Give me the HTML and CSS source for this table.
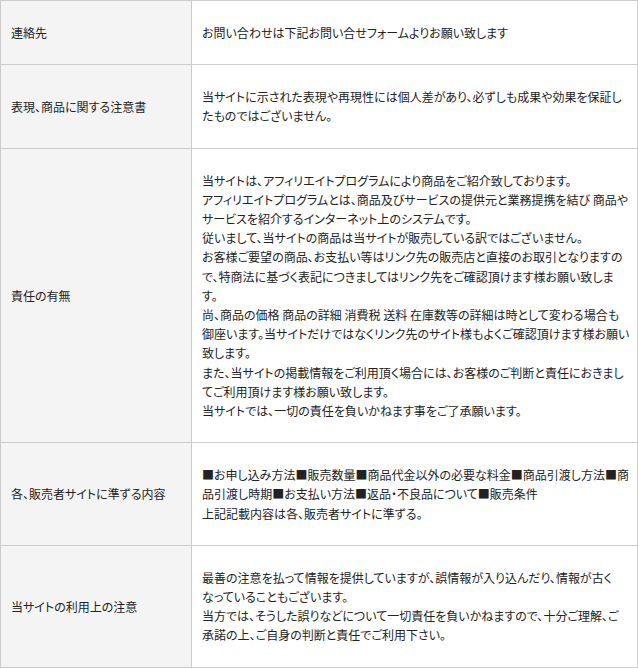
FILE: index.html
```html
<!DOCTYPE html>
<html lang="ja">
<head>
<meta charset="utf-8">
<title>注意事項</title>
<link rel="stylesheet" href="styles.css">
</head>
<body>
<div class="info-table">
  <div class="head">連絡先</div>
  <div class="body">お問い合わせは下記お問い合せフォームよりお願い致します</div>

  <div class="head">表現、商品に関する注意書</div>
  <div class="body">当サイトに示された表現や再現性には個人差があり、必ずしも成果や効果を保証し<br>たものではございません。</div>

  <div class="head">責任の有無</div>
  <div class="body">当サイトは、アフィリエイトプログラムにより商品をご紹介致しております。<br>アフィリエイトプログラムとは、商品及びサービスの提供元と業務提携を結び 商品や<br>サービスを紹介するインターネット上のシステムです。<br>従いまして、当サイトの商品は当サイトが販売している訳ではございません。<br>お客様ご要望の商品、お支払い等はリンク先の販売店と直接のお取引となりますの<br>で、特商法に基づく表記につきましてはリンク先をご確認頂けます様お願い致しま<br>す。<br>尚、商品の価格 商品の詳細 消費税 送料 在庫数等の詳細は時として変わる場合も<br>御座います。当サイトだけではなくリンク先のサイト様もよくご確認頂けます様お願い<br>致します。<br>また、当サイトの掲載情報をご利用頂く場合には、お客様のご判断と責任におきまし<br>てご利用頂けます様お願い致します。<br>当サイトでは、一切の責任を負いかねます事をご了承願います。</div>

  <div class="head">各、販売者サイトに準ずる内容</div>
  <div class="body">■お申し込み方法■販売数量■商品代金以外の必要な料金■商品引渡し方法■商<br>品引渡し時期■お支払い方法■返品・不良品について■販売条件<br>上記記載内容は各、販売者サイトに準ずる。</div>

  <div class="head">当サイトの利用上の注意</div>
  <div class="body">最善の注意を払って情報を提供していますが、誤情報が入り込んだり、情報が古く<br>なっていることもございます。<br>当方では、そうした誤りなどについて一切責任を負いかねますので、十分ご理解、ご<br>承諾の上、ご自身の判断と責任でご利用下さい。</div>
</div>
</body>
</html>
```
FILE: styles.css
```css
html, body {
  margin: 0;
  padding: 0;
  background: #fff;
}

body {
  font-family: "Noto Sans CJK JP", "Liberation Sans", sans-serif;
  font-size: 12px;
  line-height: 19.2px;
  color: #222;
}

.info-table {
  width: 638px;
  box-sizing: border-box;
  display: grid;
  grid-template-columns: 190px 445px;
  gap: 1px;
  padding: 1px;
  background: #cccccc;
}

.head {
  background: #f4f4f4;
  display: flex;
  align-items: center;
  padding: 0 10px;
  white-space: nowrap;
  font-feature-settings: "palt";
}

.body {
  background: #fff;
  padding: 22px 10px;
  white-space: nowrap;
  font-feature-settings: "palt";
}
```
